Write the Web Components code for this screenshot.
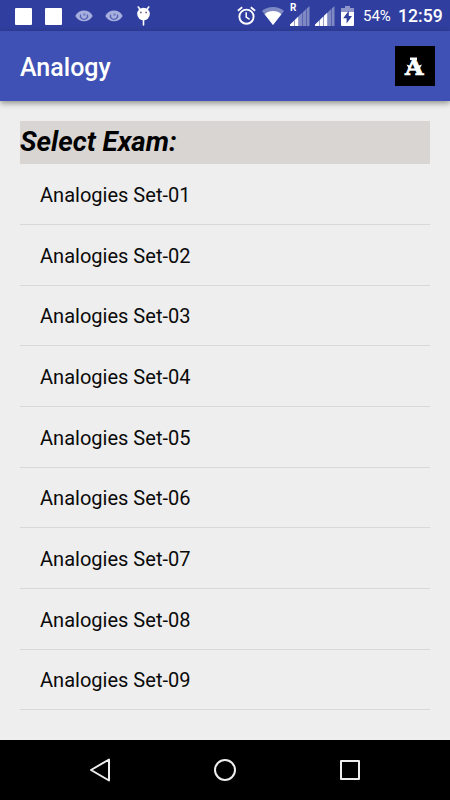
<!DOCTYPE html>
<html lang="en">
<head>
<meta charset="utf-8">
<title>Analogy</title>
<style>
  html, body {
    margin: 0;
    height: 100%;
    overflow: hidden;
    background: #eee;
    font-family: Roboto, sans-serif;
  }
</style>
</head>
<body>
<exam-app></exam-app>

<script>
const SIGNAL = `
  <svg width="20" height="20" viewBox="0 0 20 20" fill="#fff">
    <path d="M0 20V18.5L4 14.8V20zM4.5 20V14.3L8.5 10.3V20z"/>
    <path d="M9 20V9.8L12.5 6.5V20z" fill-opacity="var(--mid, .4)"/>
    <path d="M13 20V6L16 3.3V20zM16.5 20V2.8L19.5 0V20z" fill-opacity=".38"/>
  </svg>
`

const EYE = `
  <svg width="18" height="12" viewBox="0 0 18 12">
    <path d="M.3 6C4-1.2 14-1.2 17.7 6 14 13 4 13 .3 6z" fill="#a6afdd"/>
    <path d="M5.6 4.6A3.6 3.6 0 1 0 12.4 4.6" fill="none" stroke="#5361b5" stroke-width="1.3"/>
    <circle cx="9.4" cy="4.6" r="1.4" fill="#7b86ca"/>
  </svg>
`

class StatusBar extends HTMLElement {
  constructor() {
    super()
    this.attachShadow({ mode: 'open' })
    this.shadowRoot.innerHTML = `
      <style>
        :host {
          display: flex;
          justify-content: space-between;
          height: 31px;
          box-sizing: border-box;
          padding: 0 9px 0 15px;
          background: #303f9f;
          color: #fff;
        }
        .group { display: flex; align-items: center; height: 32px; }
        .square { width: 17px; height: 17px; border-radius: 1px; background: #fff; margin-right: 13px; }
        svg { display: block; flex: none; }
        .eye { margin-right: 12px; }
        .droid { margin-left: 1px; }
        .wifi { margin: 0 6px 0 6px; }
        .sim { position: relative; margin-right: 5px; }
        .sim.second { --mid: 1; margin-right: 6px; }
        .roam {
          position: absolute;
          left: 0;
          top: -3px;
          font: 700 10px/10px Roboto, sans-serif;
        }
        .percent { font-size: 15px; margin-left: 9px; width: 27px; white-space: nowrap; }
        .clock { font-size: 17.6px; font-weight: 500; margin-left: 8px; width: 43px; white-space: nowrap; }
      </style>
      <div class="group">
        <span class="square"></span>
        <span class="square"></span>
        <span class="eye">${EYE}</span>
        <span class="eye">${EYE}</span>
        <svg class="droid" width="15" height="20" viewBox="0 0 15 20">
          <path d="M2.3 1L4.5 4M12.7 1L10.5 4M7.5 13V19" stroke="#fff" stroke-width="1.6" stroke-linecap="round"/>
          <circle cx="7.5" cy="8" r="6.3" fill="#fff"/>
          <circle cx="4.9" cy="6.5" r=".9" fill="#6f6a82"/>
          <circle cx="10.1" cy="6.5" r=".9" fill="#6f6a82"/>
        </svg>
      </div>
      <div class="group">
        <svg width="19" height="20" viewBox="0 0 19 20" fill="none" stroke="#fff">
          <circle cx="9.5" cy="10.7" r="7.1" stroke-width="1.9"/>
          <path d="M.9 4.8L5.2 1.3M18.1 4.8L13.8 1.3" stroke-width="1.8"/>
          <path d="M9.2 6.2V11.2L12.6 13.4" stroke-width="1.5"/>
        </svg>
        <svg class="wifi" width="22" height="18" viewBox="0 0 22 18" fill="#fff">
          <path d="M0 4C6-1.2 16-1.2 22 4L11 18z" fill-opacity=".38"/>
          <path d="M2.6 7.2C7 3 15 3 19.4 7.2L11 18z"/>
        </svg>
        <span class="sim"><span class="roam">R</span>${SIGNAL}</span>
        <span class="sim second">${SIGNAL}</span>
        <svg width="13" height="20" viewBox="0 0 13 20">
          <path d="M4 0H9V2H13V7H0V2H4z" fill="#fff" fill-opacity=".45"/>
          <path d="M0 6H13V19Q13 20 12 20H1Q0 20 0 19z" fill="#fff"/>
          <path d="M7.8 4.8L2.2 12.2H5.6V17.4L11 10H7.8z" fill="#303f9f"/>
        </svg>
        <span class="percent">54%</span>
        <span class="clock">12:59</span>
      </div>
    `
  }
}

class AppBar extends HTMLElement {
  constructor() {
    super()
    this.attachShadow({ mode: 'open' })
    this.shadowRoot.innerHTML = `
      <style>
        :host {
          display: flex;
          align-items: center;
          justify-content: space-between;
          height: 70px;
          box-sizing: border-box;
          padding: 0 15px 0 20px;
          background: #3f51b5;
          color: #fff;
          box-shadow: 0 2px 6px rgba(0, 0, 0, .42);
        }
        .title { font-size: 25px; font-weight: 500; line-height: 30px; padding-top: 3px; }
      </style>
      <span class="title"><slot></slot></span>
      <slot name="action"></slot>
    `
  }
}

class AppBadge extends HTMLElement {
  constructor() {
    super()
    this.attachShadow({ mode: 'open' })
    this.shadowRoot.innerHTML = `
      <style>
        :host { display: block; width: 40px; height: 40px; background: #000; }
        svg { display: block; }
        text { font: 700 22px "DejaVu Serif", serif; }
      </style>
      <svg width="40" height="40" viewBox="0 0 40 40" fill="#fff">
        <text x="10" y="28.5" textLength="18.5" lengthAdjust="spacingAndGlyphs" stroke="#fff" stroke-width=".7">A</text>
        <!-- top serif and side spurs -->
        <path d="M15 11.5H22V14H15zM11.5 18.5L16 20 14 23zM27 18.5L22.5 20 24.5 23z"/>
      </svg>
    `
  }
}

class ExamList extends HTMLElement {
  constructor() {
    super()
    this.attachShadow({ mode: 'open' })
    this.shadowRoot.innerHTML = `
      <style>
        :host { display: block; flex: 1; padding: 20.4px 20px 0; }
        .heading {
          height: 43px;
          background: #d9d5d3;
          color: #000;
          font: italic 700 27.7px/41px Roboto, sans-serif;
        }
      </style>
      <div class="heading"><slot name="heading"></slot></div>
      <slot></slot>
    `
  }
}

class ExamRow extends HTMLElement {
  constructor() {
    super()
    this.attachShadow({ mode: 'open' })
    this.shadowRoot.innerHTML = `
      <style>
        :host {
          display: flex;
          align-items: center;
          height: 60.65px;
          box-sizing: border-box;
          padding: 2px 20px 0;
          border-bottom: 1px solid #d8d8d8;
          color: #0a0a0a;
          font-size: 20.05px;
        }
      </style>
      <slot></slot>
    `
  }
}

class NavBar extends HTMLElement {
  constructor() {
    super()
    this.attachShadow({ mode: 'open' })
    this.shadowRoot.innerHTML = `
      <style>
        :host {
          display: flex;
          align-items: center;
          justify-content: center;
          gap: 101px;
          height: 60px;
          background: #000;
        }
        svg { display: block; }
      </style>
      <svg width="24" height="24" viewBox="0 0 24 24" fill="none" stroke="#eee" stroke-width="2" stroke-linejoin="round">
        <path d="M3 12L21 1.5V22.5z"/>
      </svg>
      <svg width="24" height="24" viewBox="0 0 24 24" fill="none" stroke="#eee" stroke-width="2">
        <circle cx="12" cy="12" r="10"/>
      </svg>
      <svg width="24" height="24" viewBox="0 0 24 24" fill="none" stroke="#eee" stroke-width="2" stroke-linejoin="round">
        <path d="M3 3H21V21H3z"/>
      </svg>
    `
  }
}

class ExamApp extends HTMLElement {
  constructor() {
    super()
    this.attachShadow({ mode: 'open' })
    const rows = Array.from({ length: 9 }, (_, i) => `<exam-row>Analogies Set-0${i + 1}</exam-row>`).join('')
    this.shadowRoot.innerHTML = `
      <style>
        :host { display: flex; flex-direction: column; height: 100vh; }
      </style>
      <status-bar></status-bar>
      <app-bar>Analogy<app-badge slot="action"></app-badge></app-bar>
      <exam-list>
        <span slot="heading">Select Exam:</span>
        ${rows}
      </exam-list>
      <nav-bar></nav-bar>
    `
  }
}

customElements.define('status-bar', StatusBar)
customElements.define('app-bar', AppBar)
customElements.define('app-badge', AppBadge)
customElements.define('exam-list', ExamList)
customElements.define('exam-row', ExamRow)
customElements.define('nav-bar', NavBar)
customElements.define('exam-app', ExamApp)
</script>
</body>
</html>
